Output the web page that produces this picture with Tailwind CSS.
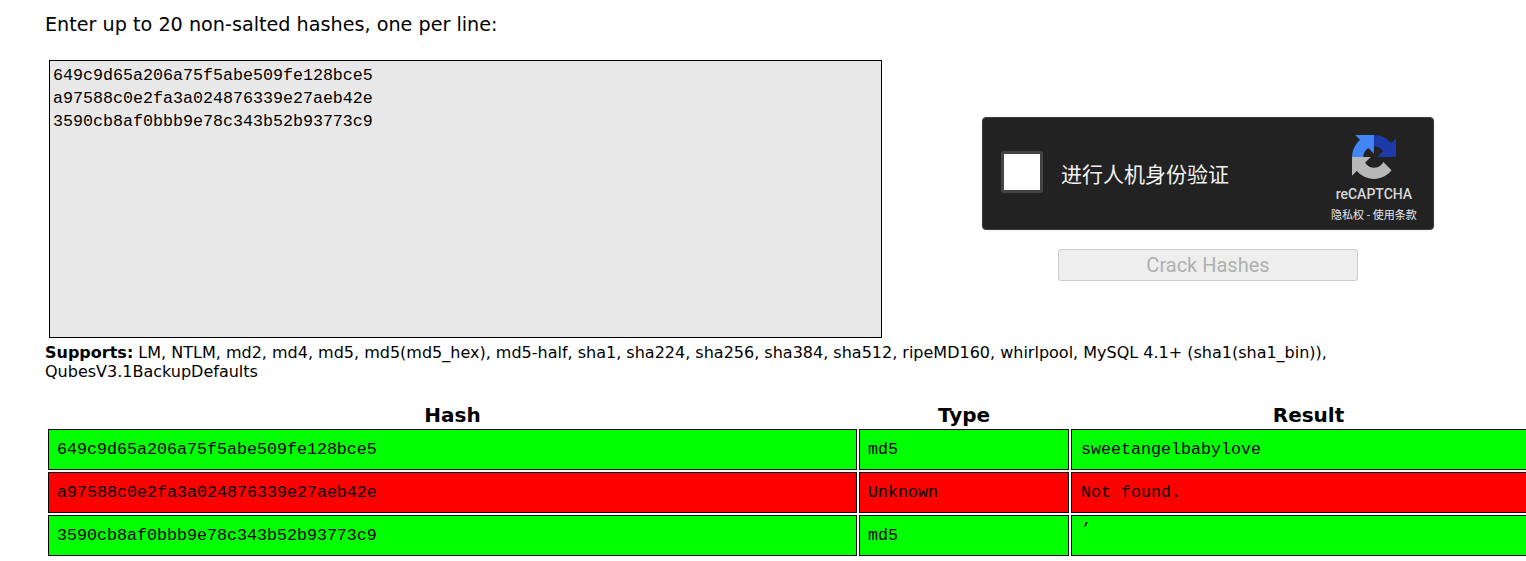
<!DOCTYPE html>
<html lang="en">
<head>
<meta charset="utf-8">
<script src="https://cdn.jsdelivr.net/npm/@tailwindcss/browser@4"></script>
<title>Crack Hashes</title>
</head>
<body class="bg-white text-black overflow-hidden font-['DejaVu_Sans',sans-serif]">
<div class="w-[1526px] h-[561px] overflow-hidden pl-[45px] pt-[13px]">
  <p class="text-[19.2px] leading-[24px] h-[47px]">Enter up to 20 non-salted hashes, one per line:</p>
  <div class="flex items-start pl-[4px]">
    <textarea readonly class="w-[833px] h-[278px] border border-black bg-[#e8e8e8] pl-[3px] pt-[3px] resize-none outline-none overflow-hidden text-[16.67px] leading-[23px] font-['Liberation_Mono',monospace]">649c9d65a206a75f5abe509fe128bce5
a97588c0e2fa3a024876339e27aeb42e
3590cb8af0bbb9e78c343b52b93773c9</textarea>
    <div class="ml-[100px] mt-[57px] w-[452px] flex flex-col items-center">
      <div class="w-[452px] h-[113px] rounded-[4px] bg-[#222222] border border-[#3a3a3a] shadow-[0_0_4px_rgba(0,0,0,0.08)] flex items-start">
        <div class="ml-[18px] mt-[33px] w-[42px] h-[42px] rounded-[3px] bg-white border-[3px] border-[#444444] shrink-0"></div>
        <div class="ml-[18px] mt-[41px] w-[200px] text-[21px] leading-[28px] text-[#f2f2f2] font-['Noto_Sans_CJK_SC',sans-serif]">进行人机身份验证</div>
        <div class="ml-[60px] w-[122px] flex flex-col items-center pt-[17px]">
          <svg class="w-[44px] h-[44px]" viewBox="0 0 64 64" aria-hidden="true">
            <path id="a" fill="#1c3aa9" d="M64 31.955l-.033-1.37V4.687l-7.16 7.16C50.948 4.674 42.033.093 32.05.093c-10.4 0-19.622 4.96-25.458 12.64l11.736 11.86a15.55 15.55 0 0 1 4.754-5.334c2.05-1.6 4.952-2.906 8.968-2.906.485 0 .86.057 1.135.163 4.976.393 9.288 3.14 11.828 7.124l-8.307 8.307c10.522-.04 22.4-.066 27.295 0"/>
            <path fill="#4285f4" transform="rotate(-90 32 32)" d="M64 31.955l-.033-1.37V4.687l-7.16 7.16C50.948 4.674 42.033.093 32.05.093c-10.4 0-19.622 4.96-25.458 12.64l11.736 11.86a15.55 15.55 0 0 1 4.754-5.334c2.05-1.6 4.952-2.906 8.968-2.906.485 0 .86.057 1.135.163 4.976.393 9.288 3.14 11.828 7.124l-8.307 8.307c10.522-.04 22.4-.066 27.295 0"/>
            <path fill="#b8b8b8" transform="rotate(180 32 32)" d="M64 31.955l-.033-1.37V4.687l-7.16 7.16C50.948 4.674 42.033.093 32.05.093c-10.4 0-19.622 4.96-25.458 12.64l11.736 11.86a15.55 15.55 0 0 1 4.754-5.334c2.05-1.6 4.952-2.906 8.968-2.906.485 0 .86.057 1.135.163 4.976.393 9.288 3.14 11.828 7.124l-8.307 8.307c10.522-.04 22.4-.066 27.295 0"/>
          </svg>
          <div class="mt-[7px] text-[14px] leading-[16px] font-medium text-[#d8d8d8] font-['Roboto',sans-serif]">reCAPTCHA</div>
          <div class="mt-[4px] text-[11px] leading-[16px] whitespace-nowrap text-[#e8e8e8] font-['Noto_Sans_CJK_SC',sans-serif]">隐私权 - 使用条款</div>
        </div>
      </div>
      <button disabled class="mt-[19px] w-[300px] h-[32px] rounded-[3px] border border-[#cccccc] bg-[#eeeeee] text-[#b0b0b0] text-[20px] font-['Roboto',sans-serif]">Crack Hashes</button>
    </div>
  </div>
  <p class="mt-[5px] w-[1340px] text-[16px] leading-[19px]"><b>Supports:</b> LM, NTLM, md2, md4, md5, md5(md5_hex), md5-half, sha1, sha224, sha256, sha384, sha512, ripeMD160, whirlpool, MySQL 4.1+ (sha1(sha1_bin)), QubesV3.1BackupDefaults</p>
  <table class="mt-[20px] ml-[1px] border-separate border-spacing-[2px] table-fixed w-[1500px]">
    <colgroup><col class="w-[809px]"><col class="w-[210px]"><col class="w-[475px]"></colgroup>
    <thead>
      <tr class="h-[24px] text-[20px] leading-[24px]"><th class="font-bold p-0">Hash</th><th class="font-bold p-0">Type</th><th class="font-bold p-0">Result</th></tr>
    </thead>
    <tbody class="text-[16.67px] font-['Liberation_Mono',monospace]">
      <tr class="h-[41px] bg-[#00ff00]"><td class="border border-black pl-[8px]">649c9d65a206a75f5abe509fe128bce5</td><td class="border border-black pl-[8px]">md5</td><td class="border border-black pl-[9px]">sweetangelbabylove</td></tr>
      <tr class="h-[41px] bg-[#ff0000]"><td class="border border-black pl-[8px]">a97588c0e2fa3a024876339e27aeb42e</td><td class="border border-black pl-[8px]">Unknown</td><td class="border border-black pl-[9px]">Not found.</td></tr>
      <tr class="h-[41px] bg-[#00ff00]"><td class="border border-black pl-[8px]">3590cb8af0bbb9e78c343b52b93773c9</td><td class="border border-black pl-[8px]">md5</td><td class="border border-black pl-[9px] align-top pt-[1px]">’</td></tr>
    </tbody>
  </table>
</div>
</body>
</html>
